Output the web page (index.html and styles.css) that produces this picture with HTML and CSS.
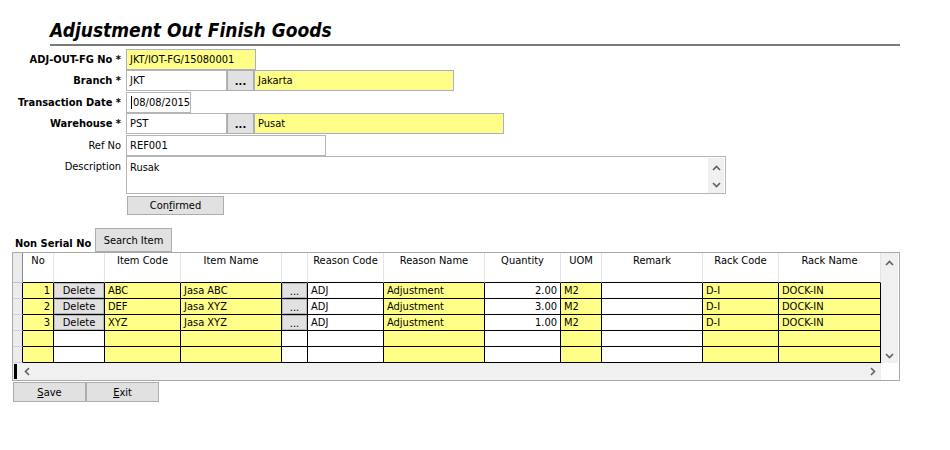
FILE: index.html
```html
<!DOCTYPE html>
<html>
<head>
<meta charset="utf-8">
<title>Adjustment Out Finish Goods</title>
<link rel="stylesheet" href="styles.css">
</head>
<body>
<div class="page">
  <h1 class="title">Adjustment Out Finish Goods</h1>

  <div class="form">
    <div class="lbl req">ADJ-OUT-FG No *</div>
    <div class="ctl"><div class="in yel w-no">JKT/IOT-FG/15080001</div></div>

    <div class="lbl req">Branch *</div>
    <div class="ctl">
      <div class="in w-code">JKT</div>
      <button class="btn dots">...</button>
      <div class="in yel w-jak">Jakarta</div>
    </div>

    <div class="lbl req">Transaction Date *</div>
    <div class="ctl"><div class="in w-date"><span class="caret"></span>08/08/2015</div></div>

    <div class="lbl req">Warehouse *</div>
    <div class="ctl">
      <div class="in w-code">PST</div>
      <button class="btn dots">...</button>
      <div class="in yel w-pus">Pusat</div>
    </div>

    <div class="lbl">Ref No</div>
    <div class="ctl"><div class="in w-ref">REF001</div></div>

    <div class="lbl top">Description</div>
    <div class="ctl">
      <div class="memo">
        <div class="memo-text">Rusak</div>
        <div class="memo-scroll">
          <svg class="arr" width="9" height="6" viewBox="0 0 9 6"><polyline points="1,5 4.5,1.5 8,5"/></svg>
          <svg class="arr" width="9" height="6" viewBox="0 0 9 6"><polyline points="1,1 4.5,4.5 8,1"/></svg>
        </div>
      </div>
    </div>

    <div class="lbl"></div>
    <div class="ctl"><button class="btn confirm">Con<u>f</u>irmed</button></div>
  </div>

  <div class="sect">
    <span class="sect-lbl">Non Serial No</span>
    <button class="btn search">Search Item</button>
  </div>

  <div class="grid">
    <div class="grid-main">
      <div class="cells">
        <div class="c rh hdr"></div>
        <div class="c h">No</div>
        <div class="c h"></div>
        <div class="c h">Item Code</div>
        <div class="c h">Item Name</div>
        <div class="c h"></div>
        <div class="c h">Reason Code</div>
        <div class="c h">Reason Name</div>
        <div class="c h">Quantity</div>
        <div class="c h">UOM</div>
        <div class="c h">Remark</div>
        <div class="c h">Rack Code</div>
        <div class="c h">Rack Name</div>

        <div class="c rh"></div>
        <div class="c y num">1</div>
        <div class="c bc"><button class="cbtn">Delete</button></div>
        <div class="c y">ABC</div>
        <div class="c y">Jasa ABC</div>
        <div class="c bc"><button class="cbtn dotbtn">...</button></div>
        <div class="c">ADJ</div>
        <div class="c y">Adjustment</div>
        <div class="c num">2.00</div>
        <div class="c y">M2</div>
        <div class="c"></div>
        <div class="c y">D-I</div>
        <div class="c y">DOCK-IN</div>

        <div class="c rh"></div>
        <div class="c y num">2</div>
        <div class="c bc"><button class="cbtn">Delete</button></div>
        <div class="c y">DEF</div>
        <div class="c y">Jasa XYZ</div>
        <div class="c bc"><button class="cbtn dotbtn">...</button></div>
        <div class="c">ADJ</div>
        <div class="c y">Adjustment</div>
        <div class="c num">3.00</div>
        <div class="c y">M2</div>
        <div class="c"></div>
        <div class="c y">D-I</div>
        <div class="c y">DOCK-IN</div>

        <div class="c rh"></div>
        <div class="c y num">3</div>
        <div class="c bc"><button class="cbtn">Delete</button></div>
        <div class="c y">XYZ</div>
        <div class="c y">Jasa XYZ</div>
        <div class="c bc"><button class="cbtn dotbtn">...</button></div>
        <div class="c">ADJ</div>
        <div class="c y">Adjustment</div>
        <div class="c num">1.00</div>
        <div class="c y">M2</div>
        <div class="c"></div>
        <div class="c y">D-I</div>
        <div class="c y">DOCK-IN</div>

        <div class="c rh"></div>
        <div class="c y"></div>
        <div class="c"></div>
        <div class="c y"></div>
        <div class="c y"></div>
        <div class="c"></div>
        <div class="c"></div>
        <div class="c y"></div>
        <div class="c"></div>
        <div class="c y"></div>
        <div class="c"></div>
        <div class="c y"></div>
        <div class="c y"></div>

        <div class="c rh"></div>
        <div class="c y"></div>
        <div class="c"></div>
        <div class="c y"></div>
        <div class="c y"></div>
        <div class="c"></div>
        <div class="c"></div>
        <div class="c y"></div>
        <div class="c"></div>
        <div class="c y"></div>
        <div class="c"></div>
        <div class="c y"></div>
        <div class="c y"></div>
      </div>
      <div class="vscroll">
        <svg class="arr" width="9" height="6" viewBox="0 0 9 6"><polyline points="1,5 4.5,1.5 8,5"/></svg>
        <svg class="arr" width="9" height="6" viewBox="0 0 9 6"><polyline points="1,1 4.5,4.5 8,1"/></svg>
      </div>
    </div>
    <div class="grid-bottom">
      <div class="hscroll">
        <span class="hbar"></span>
        <svg class="arr left" width="6" height="9" viewBox="0 0 6 9"><polyline points="5,1 1.5,4.5 5,8"/></svg>
        <svg class="arr right" width="6" height="9" viewBox="0 0 6 9"><polyline points="1,1 4.5,4.5 1,8"/></svg>
      </div>
      <div class="corner"></div>
    </div>
  </div>

  <div class="actions">
    <button class="btn act"><u>S</u>ave</button>
    <button class="btn act"><u>E</u>xit</button>
  </div>
</div>
</body>
</html>
```

FILE: styles.css
```css
* { box-sizing: border-box; }

body {
  margin: 0;
  background: #fff;
  color: #000;
  font-family: "DejaVu Sans Condensed", "DejaVu Sans", Tahoma, sans-serif;
  font-size: 11px;
}

.page { width: 950px; }

.title {
  margin: 18px 0 0 50px;
  width: 850px;
  font-size: 19px;
  line-height: 24px;
  font-weight: bold;
  font-style: italic;
  padding-bottom: 2px;
  border-bottom: 2px solid #7a7a7a;
}

.form {
  display: grid;
  grid-template-columns: 113px 1fr;
  grid-template-rows: 21px 22px 21px 22px 21px 40px 20px;
  column-gap: 5px;
  margin: 3px 0 0 8px;
}

.lbl {
  text-align: right;
  line-height: 21px;
  white-space: nowrap;
}
.lbl.req { font-weight: bold; }
.lbl.top { line-height: 15px; padding-top: 3px; }

.ctl { display: flex; align-items: flex-start; }

.in {
  height: 21px;
  border: 1px solid #b5b5b5;
  padding: 0 3px;
  display: flex;
  align-items: center;
  background: #fff;
  white-space: nowrap;
}
.yel { background: #ffff88; border-color: #a7aed0; }

.w-no { width: 130px; }
.w-code { width: 101px; }
.w-date { width: 65px; padding: 0 0 0 4px; overflow: hidden; }
.w-jak { width: 200px; }
.w-pus { width: 250px; }
.w-ref { width: 200px; }

.caret {
  flex-shrink: 0;
  width: 1px;
  height: 13px;
  background: #000;
  margin-right: 1px;
}

.btn {
  background: #e1e1e1;
  border: 1px solid #adadad;
  font: inherit;
  color: #000;
  padding: 0;
  display: flex;
  align-items: center;
  justify-content: center;
}

.dots {
  width: 27px;
  height: 21px;
  font-weight: bold;
  align-items: flex-end;
  padding-bottom: 3px;
  line-height: 10px;
}

.memo {
  width: 600px;
  height: 38px;
  border: 1px solid #b5b5b5;
  background: #fff;
  display: flex;
}
.memo-text { flex: 1; padding: 3px 3px; line-height: 15px; }
.memo-scroll {
  width: 16px;
  margin: 1px 1px 0 0;
  height: 35px;
  background: #f0f0f0;
  display: flex;
  flex-direction: column;
  align-items: center;
  justify-content: space-between;
  padding: 7px 0 5px;
}

.arr polyline {
  fill: none;
  stroke: #606060;
  stroke-width: 1.6;
}

.confirm {
  width: 97px;
  height: 19px;
  margin-left: 1px;
}

.sect {
  display: flex;
  align-items: flex-end;
  margin: 12px 0 0 15px;
}
.sect-lbl {
  width: 80px;
  font-weight: bold;
  line-height: 14px;
  padding-bottom: 1px;
  white-space: nowrap;
}
.search { width: 77px; height: 24px; }

.grid {
  margin-left: 12px;
  width: 888px;
  border: 1px solid #a9a9a9;
}
.grid-main { display: flex; }

.cells {
  display: grid;
  grid-template-columns: 10px 31px 51px 76px 101px 26px 76px 101px 76px 41px 101px 76px 102px;
  grid-template-rows: 30px repeat(5, 16px);
}

.c {
  border-right: 1px solid #000;
  border-bottom: 1px solid #000;
  padding: 0 3px;
  line-height: 15px;
  white-space: nowrap;
  overflow: hidden;
  background: #fff;
}
.c.h {
  border-right-color: #e4e4e4;
  text-align: center;
  padding-top: 1px;
  line-height: 13px;
}
.c.rh {
  background: #ebebeb;
  border-bottom-color: #d0d0d0;
  padding: 0;
}
.c.rh.hdr { border-right-color: #8a8a8a; border-bottom-color: #c0c0c0; }
.c.y { background: #ffff88; }
.c.num { text-align: right; }
.c.bc { padding: 0; }

.cbtn {
  width: 100%;
  height: 100%;
  background: #e1e1e1;
  border: 1px solid #b8b8b8;
  font: inherit;
  color: #000;
  padding: 0;
  line-height: 13px;
}
.dotbtn { line-height: 10px; padding-top: 3px; }

.vscroll {
  width: 17px;
  background: #f0f0f0;
  display: flex;
  flex-direction: column;
  align-items: center;
  justify-content: space-between;
  padding: 7px 0 4px;
}

.grid-bottom { display: flex; height: 17px; }
.hscroll {
  width: 868px;
  background: #f0f0f0;
  display: flex;
  align-items: center;
}
.hbar {
  width: 3px;
  height: 15px;
  margin-left: 1px;
  background: #000;
}
.arr.left { margin-left: 7px; }
.arr.right { margin-left: auto; margin-right: 5px; }
.corner { flex: 1; background: #fff; }

.actions {
  display: flex;
  margin: 1px 0 0 13px;
}
.act { width: 73px; height: 20px; }
```
